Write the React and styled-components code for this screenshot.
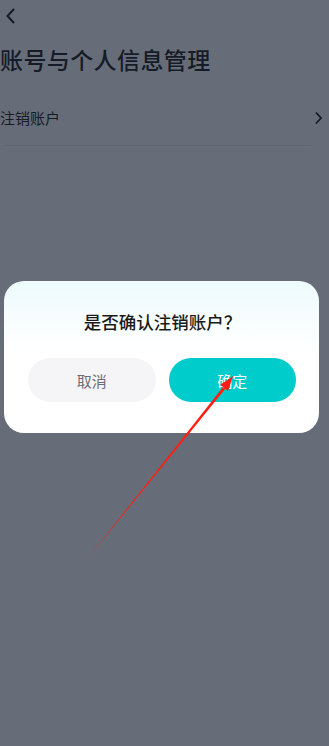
import styled, { createGlobalStyle } from 'styled-components';

const GlobalStyle = createGlobalStyle`
  html, body {
    margin: 0;
    padding: 0;
    background: #676d78;
  }
  body {
    font-family: 'Noto Sans CJK SC', 'Noto Sans', sans-serif;
  }
`;

const Page = styled.div`
  position: relative;
  width: 329px;
  height: 746px;
  overflow: hidden;
  background: #676d78;
  color: #151b27;
`;

const TopBar = styled.div`
  height: 32px;
  display: flex;
  align-items: center;
  padding-left: 5px;
`;

const Title = styled.h1`
  margin: 11px 0 0;
  font-size: 23px;
  font-weight: 500;
  line-height: 32px;
  letter-spacing: 0.4px;
`;

const Row = styled.div`
  display: flex;
  align-items: center;
  justify-content: space-between;
  height: 50px;
  margin-top: 18px;
  padding-right: 6px;
`;

const RowText = styled.span`
  font-size: 15px;
  line-height: 20px;
`;

const Divider = styled.div`
  height: 1px;
  margin: 2px 18px 0 4px;
  background: #616772;
`;

const Overlay = styled.div`
  position: absolute;
  inset: 0;
  display: flex;
  justify-content: flex-start;
  align-items: flex-start;
  padding: 281px 0 0 4px;
`;

const Dialog = styled.div`
  width: 315px;
  height: 152px;
  box-sizing: border-box;
  border-radius: 20px;
  background: linear-gradient(180deg, #edfbfd 0%, #ffffff 45%);
  padding: 29px 23px 0 24px;
  display: flex;
  flex-direction: column;
  align-items: center;
`;

const DialogTitle = styled.div`
  font-size: 17.5px;
  font-weight: 500;
  line-height: 24px;
  color: #1a1a1a;
  margin-left: 1px;
`;

const Buttons = styled.div`
  display: flex;
  gap: 13px;
  margin-top: 24px;
  width: 100%;
`;

const Button = styled.button`
  flex: 1;
  height: 44px;
  border: none;
  border-radius: 22px;
  font-family: inherit;
  font-size: 15px;
  background: ${(p) => (p.$primary ? '#00cccc' : '#f5f5f7')};
  color: ${(p) => (p.$primary ? '#ffffff' : '#6b6e76')};
`;

const Arrow = styled.svg`
  position: absolute;
  left: 0;
  top: 0;
  pointer-events: none;
`;

function App() {
  return (
    <Page>
      <GlobalStyle />
      <TopBar>
        <svg width="12" height="18" viewBox="0 0 12 18">
          <path d="M9 2 L2.5 9 L9 16" fill="none" stroke="#151b27" strokeWidth="2" />
        </svg>
      </TopBar>
      <Title>账号与个人信息管理</Title>
      <Row>
        <RowText>注销账户</RowText>
        <svg width="9" height="14" viewBox="0 0 9 14">
          <path d="M2 1.5 L7 7 L2 12.5" fill="none" stroke="#151b27" strokeWidth="1.8" />
        </svg>
      </Row>
      <Divider />
      <Overlay>
        <Dialog>
          <DialogTitle>是否确认注销账户？</DialogTitle>
          <Buttons>
            <Button>取消</Button>
            <Button $primary>确定</Button>
          </Buttons>
        </Dialog>
      </Overlay>
      <Arrow width="329" height="746" viewBox="0 0 329 746">
        <polygon points="88,558 225.4,388.8 223.0,386.9" fill="#ff1f12" />
        <polygon points="233,376 228.1,391.0 220.3,384.8" fill="#ff1f12" />
      </Arrow>
    </Page>
  );
}

export default App;
